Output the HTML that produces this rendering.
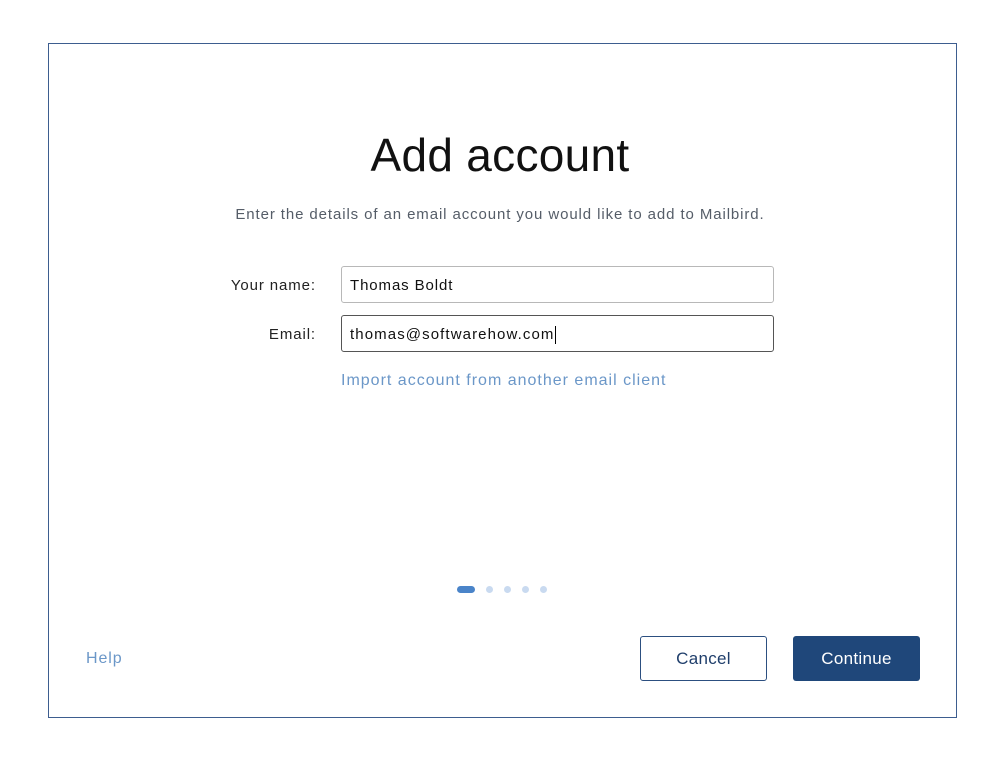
<!DOCTYPE html>
<html><head><meta charset="utf-8"><style>
body{margin:0;width:1000px;height:759px;background:#fff;font-family:"Liberation Sans",sans-serif;position:relative;overflow:hidden;letter-spacing:0.9px}
.frame{position:absolute;left:48px;top:43px;width:907px;height:673px;border:1px solid #3d5d8f;box-sizing:content-box}
.abs{position:absolute}
h1{position:absolute;left:0;width:1000px;top:128px;margin:0;text-align:center;font-weight:normal;font-size:46px;color:#111;letter-spacing:0.3px}
.sub{left:0;width:1000px;top:206px;text-align:center;font-size:15px;color:#555d68}
.lbl{font-size:15px;color:#222;text-align:right;width:120px}
.inp{left:341px;width:433px;height:37px;border:1px solid #aaa;border-radius:3px;font-size:15px;color:#111;line-height:37px;padding-left:8px;box-sizing:border-box}
.dot{top:586px;width:7px;height:7px;border-radius:4px;background:#c9daf0}
.btn{top:636px;width:127px;height:45px;border-radius:3px;box-sizing:border-box;font-size:17px;text-align:center;line-height:43px;letter-spacing:0.3px}
</style></head><body>
<div class="frame"></div>
<h1>Add account</h1>
<div class="abs sub">Enter the details of an email account you would like to add to Mailbird.</div>
<div class="abs lbl" style="left:196px;top:277px">Your name:</div>
<div class="abs lbl" style="left:196px;top:326px">Email:</div>
<div class="abs inp" style="top:266px;border-color:#b8b8b8">Thomas Boldt</div>
<div class="abs inp" style="top:315px;border-color:#555;letter-spacing:1.1px">thomas@softwarehow.com<span style="display:inline-block;width:1px;height:18px;background:#000;vertical-align:middle"></span></div>
<div class="abs" style="left:341px;top:372px;font-size:16px;color:#6b97c8;letter-spacing:1px">Import account from another email client</div>
<div class="abs" style="left:457px;top:586px;width:18px;height:7px;border-radius:4px;background:#4a84c9"></div>
<div class="abs dot" style="left:486px"></div>
<div class="abs dot" style="left:504px"></div>
<div class="abs dot" style="left:522px"></div>
<div class="abs dot" style="left:540px"></div>
<div class="abs" style="left:86px;top:650px;font-size:16px;color:#6b97c8">Help</div>
<div class="abs btn" style="left:640px;border:1.5px solid #2c4f80;color:#1f3e6b;background:#fff">Cancel</div>
<div class="abs btn" style="left:793px;background:#1f477a;color:#fff;line-height:45px">Continue</div>
</body></html>
